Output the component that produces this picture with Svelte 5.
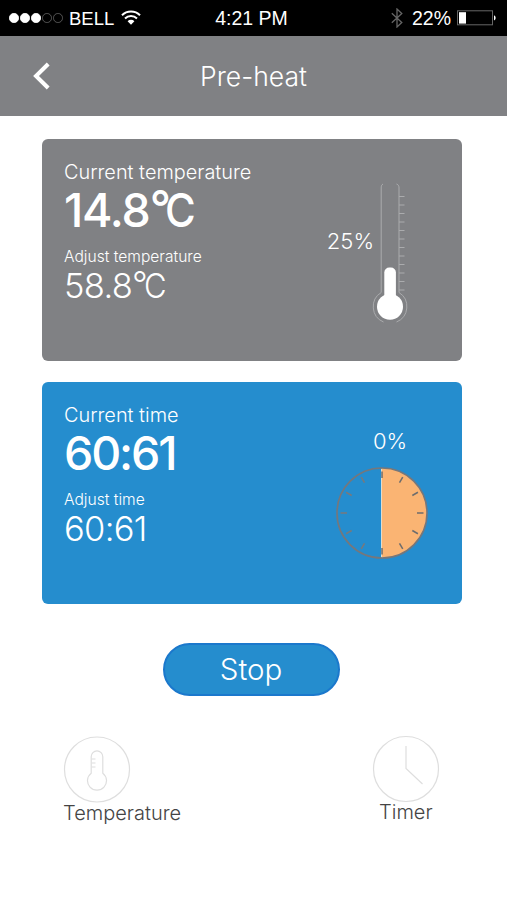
<script lang="ts">
    const scaleMarks = Array.from({ length: 12 }, (_, i) => 14.5 + i * 8.5);
    const clockMarks = Array.from({ length: 12 }, (_, i) => i * 30);
    const signal = [true, true, true, false, false];

    let temperature = $state({ current: "14.8", adjust: "58.8", percent: 25 });
    let time = $state({ current: "60:61", adjust: "60:61", percent: 0 });
</script>

<div class="screen">
    <div class="status-bar">
        <div class="carrier">
            <span class="signal">
                {#each signal as on}
                    <i class={on ? 'dot on' : 'dot'}></i>
                {/each}
            </span>
            <span class="carrier-name">BELL</span>
            <svg class="wifi" width="20" height="16" viewBox="0 0 20 16">
                <path d="M1 5.2a12.7 12.7 0 0 1 18 0" />
                <path d="M4 8.5a8.5 8.5 0 0 1 12 0" />
                <path class="fill" d="M6.6 11.2a4.8 4.8 0 0 1 6.8 0L10 14.8z" />
            </svg>
        </div>
        <div class="clock">4:21 PM</div>
        <div class="battery">
            <svg class="bluetooth" width="12" height="20" viewBox="0 0 12 20">
                <path d="M.8 5.2 10.8 14.4 6 19V1l4.8 4.6L.8 14.8" />
            </svg>
            <span class="battery-text">22%</span>
            <svg width="40" height="16" viewBox="0 0 40 16">
                <rect class="battery-case" x=".5" y=".8" width="35" height="14" />
                <rect x="2" y="2.2" width="7" height="11.4" fill="#fff" />
                <path d="M37 5.2a3 3 0 0 1 0 5.4z" fill="#fff" />
            </svg>
        </div>
    </div>

    <header>
        <button class="back" aria-label="Back">
            <svg width="18" height="28" viewBox="0 0 18 28">
                <path d="M15.2 2 3 14l12.2 12" />
            </svg>
        </button>
        <h1>Pre-heat</h1>
    </header>

    <main>
        <section class="card temperature">
            <div class="readings">
                <div class="label">Current temperature</div>
                <div class="value">{temperature.current}<span class="degree">°</span><span class="unit">C</span></div>
                <div class="label small">Adjust temperature</div>
                <div class="value small">{temperature.adjust}<span class="degree">°</span><span class="unit">C</span></div>
            </div>
            <div class="gauge">
                <span class="percent">{temperature.percent}%</span>
                <svg width="36" height="144" viewBox="0 0 36 144">
                    <g class="tube">
                        <path d="M11 2C9.2 3 9.2 4.5 9.2 6V110.5A16.6 16.6 0 0 0 11.5 140" />
                        <path d="M24.5 2C27 3 27 4.5 27 6V110.5A16.6 16.6 0 0 1 24.5 140" />
                        {#each scaleMarks as y}
                            <path d={`M27 ${y}h5.5`} />
                        {/each}
                    </g>
                    <rect x="12.3" y="85.5" width="11.6" height="36" rx="5" fill="#fff" />
                    <circle cx="18" cy="124.8" r="13" fill="#fff" />
                </svg>
            </div>
        </section>

        <section class="card time">
            <div class="readings">
                <div class="label">Current time</div>
                <div class="value">{time.current}</div>
                <div class="label small">Adjust time</div>
                <div class="value small">{time.adjust}</div>
            </div>
            <div class="dial">
                <span class="percent">{time.percent}%</span>
                <svg width="94" height="94" viewBox="0 0 94 94">
                    <path d="M47 2a45 45 0 0 1 0 90z" fill="#fab473" />
                    <path d="M46.5 2.5v89" stroke="#e2dccb" />
                    <circle class="ring" cx="47" cy="47" r="45" />
                    {#each clockMarks as angle}
                        <path
                            class={angle > 180 ? 'mark left' : 'mark'}
                            d="M47 5.5v6.5"
                            transform={`rotate(${angle} 47 47)`}
                        />
                    {/each}
                </svg>
            </div>
        </section>

        <button class="stop">Stop</button>
    </main>

    <nav>
        <div class="tab">
            <svg width="68" height="68" viewBox="0 0 68 68">
                <circle cx="34" cy="34.5" r="32.5" />
                <path d="M28.2 38.2V21.7a5.8 5.8 0 0 1 11.6 0V38.2a9.5 9.5 0 1 1-11.6 0z" />
                <path d="M28.5 24h4M28.5 28h4M28.5 32h4" />
            </svg>
            <span>Temperature</span>
        </div>
        <div class="tab timer">
            <svg width="68" height="68" viewBox="0 0 68 68">
                <circle cx="34" cy="34" r="32.5" />
                <path d="M34 11v22.5l16.5 15.5" />
            </svg>
            <span>Timer</span>
        </div>
    </nav>
</div>

<style>
    :global(body) {
        margin: 0;
        background: #fff;
    }

    .screen {
        width: 507px;
        height: 900px;
        overflow: hidden;
        background: #fff;
        font-family: Inter, "Liberation Sans", sans-serif;
        font-weight: 300;
        color: #fff;
    }

    button {
        padding: 0;
        border: 0;
        background: none;
        font: inherit;
        color: inherit;
        cursor: pointer;
    }

    svg {
        display: block;
        fill: none;
    }

    .status-bar {
        display: grid;
        grid-template-columns: 1fr auto 1fr;
        align-items: center;
        height: 36px;
        padding: 0 10px 0 9px;
        box-sizing: border-box;
        background: #000;
        font-family: "Liberation Sans", Arial, sans-serif;
        font-size: 18.5px;
        font-weight: 400;
    }

    .clock {
        margin-left: -3px;
        font-size: 19.5px;
    }

    .carrier,
    .battery,
    .signal {
        display: flex;
        align-items: center;
    }

    .signal {
        gap: 1.5px;
    }

    .dot {
        width: 9.6px;
        height: 9.6px;
        box-sizing: border-box;
        border: 1px solid #555;
        border-radius: 50%;
    }

    .dot.on {
        background: #fff;
        border-color: #fff;
    }

    .carrier-name {
        margin: 1px 7px 0 6px;
    }

    .wifi {
        stroke: #fff;
        stroke-width: 2;
    }

    .wifi .fill {
        fill: #fff;
        stroke: none;
    }

    .battery {
        justify-content: flex-end;
    }

    .bluetooth {
        stroke: #666;
        stroke-width: 1.3;
    }

    .battery-text {
        margin: 1px 6px 0 9px;
        font-size: 19.5px;
    }

    .battery-case {
        stroke: #666;
    }

    header {
        display: grid;
        grid-template-columns: 100px 1fr 100px;
        align-items: center;
        height: 80px;
        background: #808184;
    }

    .back {
        justify-self: start;
        margin-left: 33px;
    }

    .back svg {
        stroke: #fff;
        stroke-width: 4;
    }

    h1 {
        margin: 0;
        font-size: 26.5px;
        font-weight: 300;
        text-align: center;
    }

    main {
        display: flex;
        flex-direction: column;
        align-items: center;
        padding: 23px 45px 0 42px;
    }

    .card {
        display: flex;
        justify-content: space-between;
        width: 420px;
        height: 221.5px;
        margin-bottom: 21.5px;
        padding: 21px 33px 0 22px;
        box-sizing: border-box;
        border-radius: 6px;
        background: #808184;
    }

    .card.time {
        background: #258dce;
    }

    .label {
        font-size: 19.9px;
        line-height: 24px;
    }

    .value {
        font-size: 46.5px;
        font-weight: 450;
        letter-spacing: -2.1px;
        line-height: 52px;
        white-space: nowrap;
    }

    .temperature .value {
        letter-spacing: -1.2px;
    }

    .label.small {
        margin-top: 10px;
        font-size: 15.6px;
        line-height: 21px;
    }

    .value.small {
        font-size: 34.5px;
        font-weight: 300;
        letter-spacing: -0.7px;
        line-height: 38px;
    }

    /* the ring tucks in over the curve of the C */
    .value .degree {
        position: relative;
        top: -3px;
        letter-spacing: -6px;
    }

    .value.small .degree {
        top: -2px;
        letter-spacing: -3.5px;
    }

    .value .unit {
        display: inline-block;
        transform: scaleX(0.9);
        transform-origin: left;
    }

    .gauge {
        display: flex;
        align-items: flex-start;
        padding: 22px 21px 0 0;
    }

    .gauge .percent {
        margin-top: 46px;
    }

    .gauge svg {
        margin-left: -2px;
    }

    .percent {
        font-size: 22px;
        line-height: 26px;
    }

    .tube {
        stroke: #aaabad;
        stroke-width: 1;
    }

    .dial {
        display: flex;
        flex-direction: column;
        align-items: center;
        padding-top: 25px;
    }

    .dial .percent {
        margin: 0 0 12px 16px;
    }

    .ring {
        stroke: #76777b;
        stroke-width: 1.6;
    }

    .mark {
        stroke: #6d6d6d;
        stroke-width: 1.5;
    }

    .mark.left {
        stroke: #78797c;
    }

    .stop {
        width: 177px;
        height: 53px;
        margin: 18px 2px 0 0;
        border: 2px solid #1b78cc;
        border-radius: 27px;
        background: #258dce;
        font-size: 29.5px;
        line-height: 47px;
    }

    nav {
        display: flex;
        justify-content: space-between;
        padding: 39px 67px 0 63px;
        color: #444;
        font-size: 20px;
    }

    .tab svg {
        stroke: #dedede;
        stroke-width: 1.2;
    }

    .tab span {
        display: block;
        line-height: 20px;
    }

    .timer span {
        margin: -1px 0 0 7px;
    }
</style>
